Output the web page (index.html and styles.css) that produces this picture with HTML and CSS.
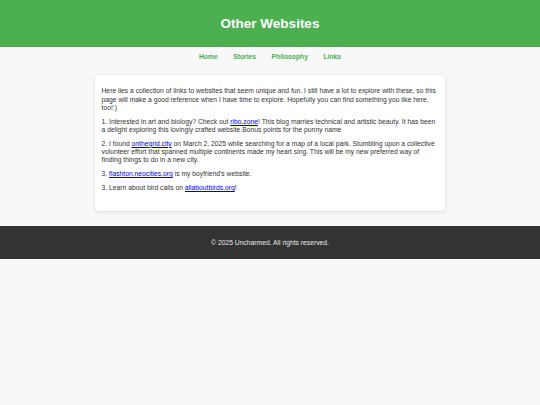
FILE: index.html
```html
<!DOCTYPE html>
<html lang="en">
<head>
<meta charset="utf-8">
<title>Other Websites</title>
<link rel="stylesheet" href="styles.css">
</head>
<body>
<header class="site-header">
  <h1 class="site-title">Other Websites</h1>
</header>
<nav class="site-nav">
  <a href="#">Home</a>
  <a href="#">Stories</a>
  <a href="#">Philosophy</a>
  <a href="#">Links</a>
</nav>
<main class="card">
  <p>Here lies a collection of links to websites that seem unique and fun. I still have a lot to explore with these, so this page will make a good reference when I have time to explore. Hopefully you can find something you like here, too!:)</p>
  <p>1. Interested in art and biology? Check out <a href="#">ribo.zone</a>! This blog marries technical and artistic beauty. It has been a delight exploring this lovingly crafted website.Bonus points for the punny name</p>
  <p>2. I found <a href="#">onthegrid.city</a> on March 2, 2025 while searching for a map of a local park. Stumbling upon a collective volunteer effort that spanned multiple continents made my heart sing. This will be my new preferred way of finding things to do in a new city.</p>
  <p>3. <a href="#">flashton.neocities.org</a> is my boyfriend's website.</p>
  <p>3. Learn about bird calls on <a href="#">allaboutbirds.org</a>!</p>
</main>
<footer class="site-footer">
  <p>© 2025 Uncharmed. All rights reserved.</p>
</footer>
</body>
</html>
```
FILE: styles.css
```css
html, body {
  margin: 0;
  padding: 0;
}
body {
  background: #f8f8f8;
  font-family: "Liberation Sans", Arial, sans-serif;
  color: #333;
}
.site-header {
  background: #4caf50;
  height: 47px;
  display: flex;
  align-items: center;
  justify-content: center;
}
.site-title {
  margin: 0;
  color: #fff;
  font-size: 13.5px;
  line-height: 16px;
  font-weight: bold;
}
.site-nav {
  display: flex;
  justify-content: center;
  gap: 15.5px;
  padding: 6.2px 0;
  line-height: 8.2px;
}
.site-nav a {
  color: #4caf50;
  font-weight: bold;
  font-size: 6.75px;
  text-decoration: none;
}
.card {
  display: block;
  width: 350px;
  box-sizing: border-box;
  margin: 7.4px auto 0;
  background: #fff;
  border-radius: 4px;
  box-shadow: 0 1px 4px rgba(0, 0, 0, 0.12);
  padding: 6.8px 6.5px 12.7px;
  font-size: 6.75px;
  line-height: 8.2px;
  color: #333;
}
.card p {
  margin: 5.7px 0;
}
.card a {
  color: #0000ee;
}
.site-footer {
  margin-top: 15px;
  background: #333;
  color: #e8e8e8;
  height: 33px;
  display: flex;
  align-items: center;
  justify-content: center;
  font-size: 6.75px;
}
.site-footer p {
  margin: 0;
}
```
